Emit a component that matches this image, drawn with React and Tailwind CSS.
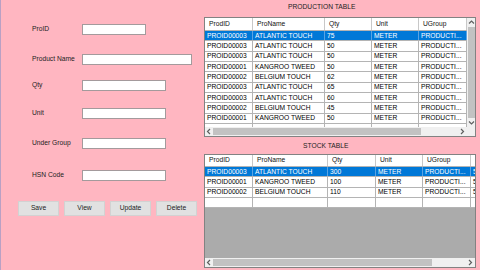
import React from "react";

const font = { fontFamily: '"Liberation Sans", Arial, sans-serif' };

const TOP_COLS = ["w-[48px]", "w-[72px]", "w-[47px]", "w-[47px]", "w-[48px]"];
const STOCK_COLS = ["w-[48px]", "w-[75px]", "w-[48px]", "w-[47px]", "w-[48px]", "w-[40px]"];

const topRows = [
  ["PROID00003", "ATLANTIC TOUCH", "75", "METER", "PRODUCTI..."],
  ["PROID00003", "ATLANTIC TOUCH", "50", "METER", "PRODUCTI..."],
  ["PROID00003", "ATLANTIC TOUCH", "50", "METER", "PRODUCTI..."],
  ["PROID00001", "KANGROO TWEED", "50", "METER", "PRODUCTI..."],
  ["PROID00002", "BELGIUM TOUCH", "62", "METER", "PRODUCTI..."],
  ["PROID00003", "ATLANTIC TOUCH", "65", "METER", "PRODUCTI..."],
  ["PROID00003", "ATLANTIC TOUCH", "60", "METER", "PRODUCTI..."],
  ["PROID00002", "BELGIUM TOUCH", "45", "METER", "PRODUCTI..."],
  ["PROID00001", "KANGROO TWEED", "50", "METER", "PRODUCTI..."],
  ["", "", "", "", ""],
];

const stockRows = [
  ["PROID00003", "ATLANTIC TOUCH", "300", "METER", "PRODUCTI...", "5208"],
  ["PROID00001", "KANGROO TWEED", "100", "METER", "PRODUCTI...", "5208"],
  ["PROID00002", "BELGIUM TOUCH", "110", "METER", "PRODUCTI...", "5208"],
  ["", "", "", "", "", ""],
];

function Chevron({ dir }) {
  const pts = {
    left: "4,1 1.5,3.5 4,6",
    right: "2,1 4.5,3.5 2,6",
    up: "1,4.5 3.5,2 6,4.5",
    down: "1,2.5 3.5,5 6,2.5",
  }[dir];
  return (
    <svg width="7" height="7" viewBox="0 0 7 7">
      <polyline points={pts} fill="none" stroke="#606060" strokeWidth="1.2" />
    </svg>
  );
}

function Header({ cols, labels, h }) {
  return (
    <div className={`flex shrink-0 bg-white border-b border-[#b4b4b4] ${h}`}>
      {labels.map((l, i) => (
        <div
          key={i}
          className={`${cols[i]} shrink-0 border-r border-[#c8c8c8] pl-[4px] flex items-center overflow-hidden whitespace-nowrap text-[6.7px] text-[#111]`}
        >
          {l}
        </div>
      ))}
    </div>
  );
}

function Row({ cols, cells, selected }) {
  return (
    <div
      className={`flex shrink-0 h-[10.33px] border-b border-[#b4b4b4] ${
        selected ? "bg-[#0078d7] text-white" : "bg-white text-black"
      }`}
    >
      {cells.map((c, i) => (
        <div
          key={i}
          className={`${cols[i]} shrink-0 border-r ${
            selected ? "border-[#5aa3e3]" : "border-[#b4b4b4]"
          } pl-[2px] flex items-center overflow-hidden whitespace-nowrap text-[6.7px] leading-[10px]`}
        >
          {c}
        </div>
      ))}
    </div>
  );
}

function HScroll({ thumb }) {
  return (
    <div className="flex h-[9px] shrink-0 bg-[#f0f0f0] flex-1">
      <div className="w-[8px] flex items-center justify-center">
        <Chevron dir="left" />
      </div>
      <div className="flex-1 flex items-center">
        <div className={`${thumb} h-[7px] bg-[#c2c2c2]`} />
      </div>
      <div className="w-[9px] flex items-center justify-center">
        <Chevron dir="right" />
      </div>
    </div>
  );
}

function FormRow({ label, mt, w }) {
  return (
    <div className={`flex items-center h-[11px] ${mt}`}>
      <div className="w-[50px] pl-[31px] box-content text-[6.7px] text-[#222] whitespace-nowrap">
        {label}
      </div>
      <div className={`${w} h-[11px] bg-white border border-[#a39a9c]`} />
    </div>
  );
}

function Btn({ children }) {
  return (
    <div className="w-[41px] h-[15px] bg-[#e1e1e1] border border-[#d2d2d2] flex items-center justify-center text-[6.7px] text-[#222]">
      {children}
    </div>
  );
}

export default function App() {
  return (
    <div
      style={font}
      className="w-[480px] h-[270px] bg-[#ffb6c1] border-l border-[#b9a0c4] flex overflow-hidden"
    >
      {/* Left form */}
      <div className="w-[203px] flex flex-col">
        <FormRow label="ProID" mt="mt-[24px]" w="w-[64px]" />
        <FormRow label="Product Name" mt="mt-[19px]" w="w-[110px]" />
        <FormRow label="Qty" mt="mt-[15px]" w="w-[84px]" />
        <FormRow label="Unit" mt="mt-[17px]" w="w-[84px]" />
        <FormRow label="Under Group" mt="mt-[19px]" w="w-[84px]" />
        <FormRow label="HSN Code" mt="mt-[21px]" w="w-[84px]" />
        <div className="flex gap-[5px] pl-[17px] mt-[20px]">
          <Btn>Save</Btn>
          <Btn>View</Btn>
          <Btn>Update</Btn>
          <Btn>Delete</Btn>
        </div>
      </div>

      {/* Right tables */}
      <div className="w-[272px] flex flex-col">
        <div className="h-[17px] pl-[84px] text-[6.7px] leading-[13px] text-[#222] whitespace-nowrap">
          PRODUCTION TABLE
        </div>
        <div className="h-[120px] border border-[#828282] bg-[#ababab] flex flex-col shrink-0">
          <div className="flex flex-1 min-h-0">
            <div className="w-[262px] flex flex-col overflow-hidden bg-white">
              <Header
                cols={TOP_COLS}
                labels={["ProdID", "ProName", "Qty", "Unit", "UGroup"]}
                h="h-[13px]"
              />
              {topRows.map((r, i) => (
                <Row key={i} cols={TOP_COLS} cells={r} selected={i === 0} />
              ))}
            </div>
            <div className="w-[8px] bg-[#f0f0f0] flex flex-col items-center">
              <div className="h-[9px] flex items-center justify-center">
                <Chevron dir="up" />
              </div>
              <div className="flex-1 w-[7px] bg-[#c2c2c2]" />
              <div className="h-[9px] flex items-center justify-center">
                <Chevron dir="down" />
              </div>
            </div>
          </div>
          <div className="flex h-[9px] shrink-0">
            <HScroll thumb="w-[208px]" />
            <div className="w-[8px] bg-[#f0f0f0]" />
          </div>
        </div>

        <div className="h-[17px] pl-[99px] text-[6.7px] leading-[17px] text-[#222] whitespace-nowrap">
          STOCK TABLE
        </div>
        <div className="h-[114px] border border-[#828282] bg-[#ababab] flex flex-col shrink-0">
          <div className="flex-1 min-h-0 flex flex-col overflow-hidden">
            <Header
              cols={STOCK_COLS}
              labels={["ProdID", "ProName", "Qty", "Unit", "UGroup", "HSNCode"]}
              h="h-[12px]"
            />
            {stockRows.map((r, i) => (
              <Row key={i} cols={STOCK_COLS} cells={r} selected={i === 0} />
            ))}
          </div>
          <div className="flex h-[9px] shrink-0">
            <HScroll thumb="w-[219px]" />
          </div>
        </div>
      </div>
    </div>
  );
}
